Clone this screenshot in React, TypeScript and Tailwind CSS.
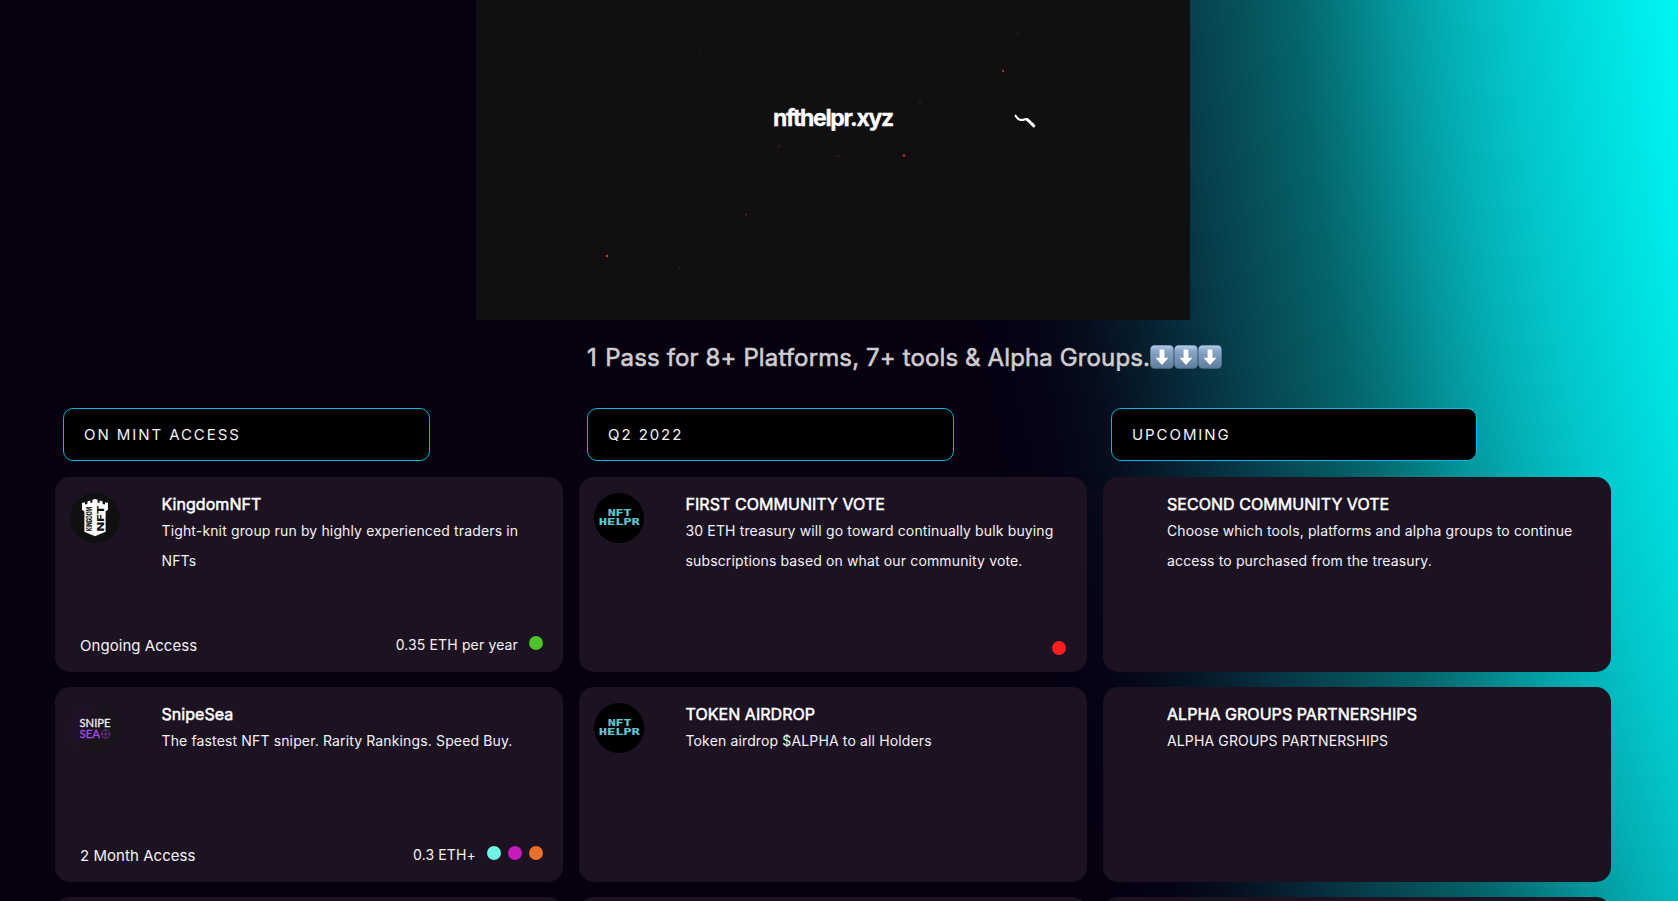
import type { ReactNode } from "react";

type Item = {
  title: string;
  text: string;
  logo?: ReactNode;
  access?: string;
  price?: string;
  dots?: string[];
  dotsLow?: boolean;
};

type Column = { heading: string; pill: string; items: Item[] };

function KingdomLogo() {
  return (
    <svg viewBox="0 0 50 50" className="size-[50px]">
      <circle cx="25" cy="25" r="25" fill="#101010" />
      <path
        d="M12 10l3-.8v2.400l2.400-.6V8.400l3-.8V10l2-.5V6.800L25 6l2.600.8v2.700l2 .5V7.600l3 .8V11l2.400.6V9.200l3 .8v6.800l-2.400 1.800v20.200L25 43.200l-10.600-4.400V18.600L12 16.800z"
        fill="#fff"
      />
      <text
        transform="translate(22 38) rotate(-90)"
        fontFamily="Inter, sans-serif"
        fontSize="7.800"
        fontWeight="800"
        textLength="24"
        lengthAdjust="spacingAndGlyphs"
        fill="#101010"
      >
        KINGDOM
      </text>
      <text
        transform="translate(34.300 38.600) rotate(-90)"
        fontFamily="Inter, sans-serif"
        fontSize="9.600"
        fontWeight="800"
        textLength="26"
        lengthAdjust="spacingAndGlyphs"
        fill="#101010"
      >
        NFT
      </text>
    </svg>
  );
}

function HelprLogo() {
  return (
    <svg viewBox="0 0 50 50" className="size-[50px]">
      <circle cx="25" cy="25" r="25" fill="#000" />
      {[
        { dx: -0.6, fill: "#8c3a44" },
        { dx: 0, fill: "#4accd4" },
      ].map((l) => (
        <g
          key={l.fill}
          fill={l.fill}
          fontFamily="'DejaVu Sans Mono', monospace"
          fontWeight="700"
          fontSize="9.200"
        >
          <text x={14 + l.dx} y="23" textLength="23.500" lengthAdjust="spacingAndGlyphs">
            NFT
          </text>
          <text x={5 + l.dx} y="32.300" textLength="41" lengthAdjust="spacingAndGlyphs">
            HELPR
          </text>
        </g>
      ))}
    </svg>
  );
}

function SnipeLogo() {
  return (
    <svg viewBox="0 0 50 50" className="size-[50px]">
      <defs>
        <linearGradient id="snipe" x1="0" y1="0.200" x2="1" y2="0.600">
          <stop offset="0" stopColor="#230f2e" />
          <stop offset="0.600" stopColor="#19141c" />
          <stop offset="1" stopColor="#18151b" />
        </linearGradient>
      </defs>
      <circle cx="25" cy="25" r="25" fill="url(#snipe)" />
      <g fontFamily="Lato, sans-serif" fontSize="11.600">
        <text x="9.500" y="23.600" fill="#f0eef2" stroke="#f0eef2" strokeWidth="0.300" textLength="31" lengthAdjust="spacingAndGlyphs">
          SNIPE
        </text>
        <text x="9.500" y="35.300" fill="#a84fe8" stroke="#a84fe8" strokeWidth="0.300" textLength="20.500" lengthAdjust="spacingAndGlyphs">
          SEA
        </text>
      </g>
      <g fill="none" stroke="#7a3a9c" strokeWidth="0.800">
        <circle cx="35.700" cy="31" r="4.200" />
        <path d="M30.700 31h10M35.700 26v10" />
      </g>
    </svg>
  );
}

function DownArrow() {
  return (
    <svg viewBox="0 0 24 24" className="size-6">
      <defs>
        <linearGradient id="key" x1="0" y1="0" x2="0" y2="1">
          <stop offset="0" stopColor="#b4cde6" />
          <stop offset="0.220" stopColor="#8aa9cb" />
          <stop offset="1" stopColor="#5f7d9c" />
        </linearGradient>
      </defs>
      <rect x="0.300" y="0.300" width="23.400" height="23.400" rx="4.200" fill="#55708d" />
      <rect x="0.600" y="0.500" width="22.800" height="22.400" rx="4" fill="url(#key)" />
      <path d="M9.600 4.500h4.800v8.300h4L12 20l-6.400-7.200h4z" fill="#fff" />
    </svg>
  );
}

const columns: Column[] = [
  {
    heading: "ON MINT ACCESS",
    pill: "w-[367px]",
    items: [
      {
        title: "KingdomNFT",
        text: "Tight-knit group run by highly experienced traders in NFTs",
        logo: <KingdomLogo />,
        access: "Ongoing Access",
        price: "0.35 ETH per year",
        dots: ["bg-[#4bc328]"],
      },
      {
        title: "SnipeSea",
        text: "The fastest NFT sniper. Rarity Rankings. Speed Buy.",
        logo: <SnipeLogo />,
        access: "2 Month Access",
        price: "0.3 ETH+",
        dots: ["bg-[#70f4e4]", "bg-[#c61cbc]", "bg-[#e7712c]"],
      },
    ],
  },
  {
    heading: "Q2 2022",
    pill: "w-[367px]",
    items: [
      {
        title: "FIRST COMMUNITY VOTE",
        text: "30 ETH treasury will go toward continually bulk buying subscriptions based on what our community vote.",
        logo: <HelprLogo />,
        dots: ["bg-[#fb2020]"],
        dotsLow: true,
      },
      { title: "TOKEN AIRDROP", text: "Token airdrop $ALPHA to all Holders", logo: <HelprLogo /> },
    ],
  },
  {
    heading: "UPCOMING",
    pill: "w-[366px]",
    items: [
      {
        title: "SECOND COMMUNITY VOTE",
        text: "Choose which tools, platforms and alpha groups to continue access to purchased from the treasury.",
      },
      { title: "ALPHA GROUPS PARTNERSHIPS", text: "ALPHA GROUPS PARTNERSHIPS" },
    ],
  },
];

function Card({ item }: { item: Item }) {
  return (
    <article className="flex h-[195px] shrink-0 flex-col justify-between rounded-[15px] bg-[#1c1222] pt-[15px]">
      <div className="flex">
        {item.logo ? (
          <div className="w-[106.5px] shrink-0 pt-px pl-[15px]">{item.logo}</div>
        ) : (
          <div className="w-16 shrink-0" />
        )}
        <div className="pr-8">
          <h3 className="text-base leading-6 font-normal tracking-[0.05px] [-webkit-text-stroke:0.5px_#fff]">{item.title}</h3>
          <p className="text-[14px] leading-[30px] tracking-[0.14px] text-[#f4f2f6]">{item.text}</p>
        </div>
      </div>
      {item.dots && (
        <div className={item.dotsLow ? "flex items-start pr-[21px] pb-[17px] pl-[25px]" : "flex items-start pr-5 pb-[15px] pl-[25px]"}>
          {item.access && <span className="text-[15px] leading-[22px] tracking-[0.05px] text-[#f4f2f6]">{item.access}</span>}
          <span className="ml-auto text-[14px] leading-5 tracking-[0.14px] text-[#f4f2f6]">{item.price}</span>
          <span className={item.dotsLow ? "flex gap-[7px]" : "mt-px ml-[11px] flex gap-[7px]"}>
            {item.dots.map((d) => (
              <i key={d} className={`size-[14px] rounded-full ${d}`} />
            ))}
          </span>
        </div>
      )}
    </article>
  );
}

const sparks = [
  { x: 223.5, y: 51, c: "#5a2024", r: 0.7 },
  { x: 286, y: 2, c: "#241416", r: 1.2 },
  { x: 444, y: 102.5, c: "#80181c", r: 0.8 },
  { x: 527, y: 71, c: "#d4202c", r: 1.2 },
  { x: 542, y: 33, c: "#5a1c20", r: 0.8 },
  { x: 542, y: 20, c: "#2c1618", r: 0.8 },
  { x: 525, y: 98, c: "#3c1a1c", r: 0.7 },
  { x: 303, y: 146.5, c: "#5c2024", r: 0.9 },
  { x: 362, y: 156, c: "#7a2024", r: 0.8 },
  { x: 428, y: 155.5, c: "#d0262c", r: 1.2 },
  { x: 232, y: 155, c: "#241416", r: 1 },
  { x: 410, y: 189, c: "#301618", r: 0.8 },
  { x: 270, y: 214.5, c: "#7e2024", r: 0.9 },
  { x: 181.5, y: 240, c: "#5a2024", r: 0.8 },
  { x: 131, y: 256, c: "#d82c30", r: 1.3 },
  { x: 203.5, y: 268.5, c: "#70201f", r: 0.8 },
];

function Video() {
  return (
    <div className="relative h-80 w-[714px] shrink-0 bg-[#101010]">
      <svg viewBox="0 0 714 320" className="absolute inset-0 size-full">
        {sparks.map((s) => (
          <circle key={`${s.x}-${s.y}`} cx={s.x} cy={s.y} r={s.r} fill={s.c} />
        ))}
        <g fill="none" stroke="#fff" strokeLinecap="round" strokeLinejoin="round">
          <path d="M539.700 115.800c1.600 3.300 5.200 5 8.600 3.700 1.300-.5 2.200-.6 3.200.2" strokeWidth="2.200" />
          <path d="M551.300 119.500l6.500 6.300" strokeWidth="3" />
        </g>
      </svg>
      <p className="pt-[103px] pl-[297px] text-[23px] leading-[30px] font-bold tracking-[-1.33px] [-webkit-text-stroke:0.3px_#fff]">
        nfthelpr.xyz
      </p>
    </div>
  );
}

export default function App() {
  return (
    <main className="flex h-screen flex-col overflow-hidden bg-[#060010] bg-[radial-gradient(circle_4300px_at_5176px_-369px,#00ffff_3400px,#00f4f4_3522px,#00dcde_3612px,#03c4c9_3690px,#03b0b5_3745px,#04979c_3800px,#047c82_3850px,#05646b_3900px,#06515a_3955px,#073e4b_4010px,#062f3f_4050px,#071e2d_4095px,#060e1e_4145px,#050315_4205px,#060010_4270px)] font-['Inter',sans-serif] text-white [font-optical-sizing:none]">
      <div className="pl-[476px]">
        <Video />
      </div>
      <h2 className="flex h-[88px] shrink-0 items-start pt-[21px] pl-[587px] text-2xl leading-8 font-normal tracking-[0.13px] text-[#cfcccf] [-webkit-text-stroke:0.6px_#cfcccf]">
        <span className="whitespace-nowrap pt-px">
          <span className="tracking-[0.8px]">1 </span>
          Pass for 8+ Platforms, 7+ tools &amp; Alpha Groups.
        </span>
        <span className="flex pt-1">
          <DownArrow />
          <DownArrow />
          <DownArrow />
        </span>
      </h2>
      <div className="flex gap-4 pl-[55px]">
        {columns.map((col) => (
          <section key={col.heading} className="flex w-[508px] shrink-0 flex-col gap-[15px]">
            <h4
              className={`mb-px ml-2 flex h-[53px] items-center rounded-[10px] border border-[#04b8e0] bg-black pt-px pl-5 text-[15px] tracking-[1.93px] text-[#f4f2f6] ${col.pill}`}
            >
              {col.heading}
            </h4>
            {col.items.map((item) => (
              <Card key={item.title} item={item} />
            ))}
            <div className="h-[195px] shrink-0 rounded-[15px] bg-[#1c1222]" />
          </section>
        ))}
      </div>
    </main>
  );
}
